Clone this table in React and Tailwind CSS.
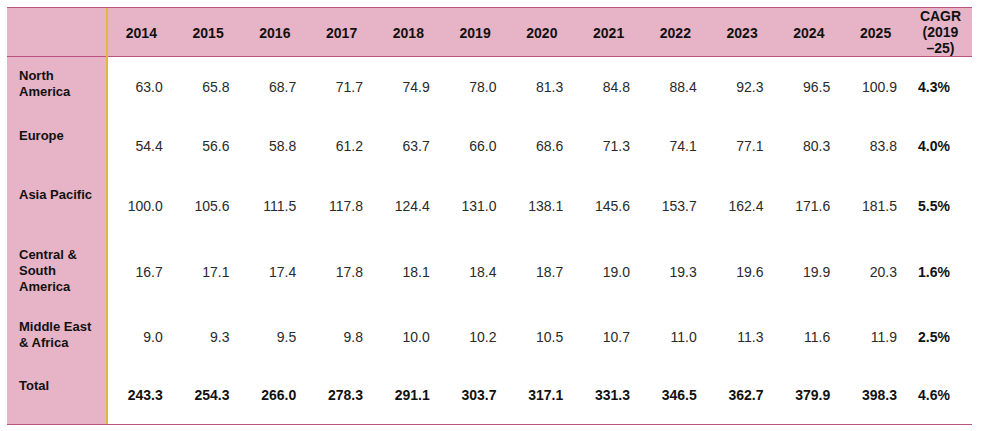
import React from 'react';

const years = ['2014', '2015', '2016', '2017', '2018', '2019', '2020', '2021', '2022', '2023', '2024', '2025'];

const rows = [
    { label: ['North', 'America'], h: 'h-[60px]', values: ['63.0', '65.8', '68.7', '71.7', '74.9', '78.0', '81.3', '84.8', '88.4', '92.3', '96.5', '100.9'], cagr: '4.3%' },
    { label: ['Europe'], h: 'h-[59px]', values: ['54.4', '56.6', '58.8', '61.2', '63.7', '66.0', '68.6', '71.3', '74.1', '77.1', '80.3', '83.8'], cagr: '4.0%' },
    { label: ['Asia Pacific'], h: 'h-[60px]', values: ['100.0', '105.6', '111.5', '117.8', '124.4', '131.0', '138.1', '145.6', '153.7', '162.4', '171.6', '181.5'], cagr: '5.5%' },
    { label: ['Central &', 'South', 'America'], h: 'h-[72px]', values: ['16.7', '17.1', '17.4', '17.8', '18.1', '18.4', '18.7', '19.0', '19.3', '19.6', '19.9', '20.3'], cagr: '1.6%' },
    { label: ['Middle East', '& Africa'], h: 'h-[59px]', values: ['9.0', '9.3', '9.5', '9.8', '10.0', '10.2', '10.5', '10.7', '11.0', '11.3', '11.6', '11.9'], cagr: '2.5%' },
    { label: ['Total'], h: 'h-[57px]', values: ['243.3', '254.3', '266.0', '278.3', '291.1', '303.7', '317.1', '331.3', '346.5', '362.7', '379.9', '398.3'], cagr: '4.6%', bold: true },
];

const cols = 'grid grid-cols-[101px_repeat(12,minmax(0,1fr))_63px]';

const App = () => {
    return (
        <div className="min-h-screen bg-white pt-[7px] pl-[7px] font-['Liberation_Sans',Arial,sans-serif]">
            <div className="w-[965px] border-y border-[#b9527e]">
                {/* header */}
                <div className={`${cols} h-[49px] bg-[#e7b3c6] border-b border-[#b9527e] text-[14px] leading-4 font-bold text-[#111]`}>
                    <div className="border-r-2 border-[#e4b540]" />
                    {years.map(y => (
                        <div key={y} className="flex items-center justify-center">{y}</div>
                    ))}
                    <div className="flex items-center justify-center text-center pb-[2px]">
                        CAGR<br />(2019<br />–25)
                    </div>
                </div>

                {/* body */}
                {rows.map(row => (
                    <div key={row.label.join(' ')} className={`${cols} ${row.h}`}>
                        <div className="bg-[#e7b3c6] border-r-2 border-[#e4b540] pl-3 pt-[11px] text-[13px] leading-4 font-bold text-[#111]">
                            {row.label.map(l => <div key={l}>{l}</div>)}
                        </div>
                        {row.values.map((v, i) => (
                            <div key={i} className={`flex items-center justify-end pr-3 text-[14px] ${row.bold ? 'font-bold text-[#111]' : 'text-[#2a2a2a]'}`}>
                                {v}
                            </div>
                        ))}
                        <div className="flex items-center pl-[9px] text-[14px] font-bold text-[#111]">{row.cagr}</div>
                    </div>
                ))}
            </div>
        </div>
    );
};

export default App;
